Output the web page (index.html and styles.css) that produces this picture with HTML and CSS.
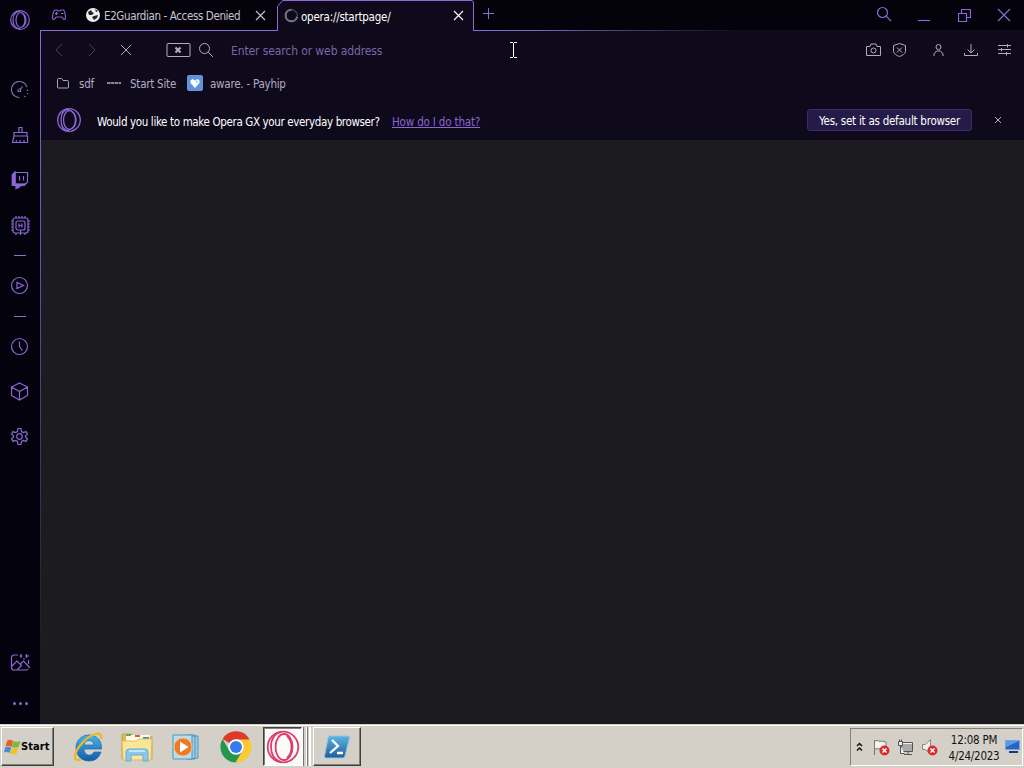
FILE: index.html
```html
<!DOCTYPE html>
<html lang="en">
<head>
  <meta charset="UTF-8" />
  <meta name="viewport" content="width=device-width, initial-scale=1.0"/>
  <title>Opera GX</title>
  <link rel="stylesheet" href="styles.css">
</head>
<body>
  <div class="browser">
    <aside class="sidebar">
      <div class="side-logo">
        <svg width="22" height="22" viewBox="0 0 22 22"><circle cx="11" cy="11" r="9.300"/><ellipse cx="11.500" cy="11" rx="4.500" ry="7.500"/><path d="M11 2C5 3 4 7 4 11s2 8 7 9M12.500 4c6 2 6 12 0 14"/></svg>
      </div>
      <div class="side-item dim">
        <svg width="20" height="20" viewBox="0 0 20 20"><path d="M9.500 17.500a8 8 0 1 1 7.500-10.500"/><path d="M17.500 9.500v1.500M17.500 13v1M15.500 16l-1 1"/><path d="M12.500 6.500l-2 3M8 9.500v2h2.500v-2.500H8.500"/></svg>
      </div>
      <div class="side-item">
        <svg width="20" height="20" viewBox="0 0 20 20"><path d="M9 7.500V2.500h3v5M4 11V7.500h13V11zM4 11l-1.500 6.500h15V11M6 17.500l.5-2.500M10 17.500V15M14 17.500V15"/></svg>
      </div>
      <div class="side-item">
        <svg width="20" height="20" viewBox="0 0 20 20"><path d="M5 2.500h12.500V12L14 15.500h-3L8 18v-2.500H5z"/><path class="solid" d="M5 2L2 5v10.500h4v3l3-3h5l2-2H5z"/><path d="M9.500 6v4.500M13.500 6v4.500"/></svg>
      </div>
      <div class="side-item">
        <svg width="20" height="20" viewBox="0 0 20 20"><rect x="3" y="3" width="15" height="15" rx="2"/><rect x="6" y="6" width="9" height="9" rx="2"/><path d="M9 8.500v4M12 8.500v4M9 10.500h3M6 1v2M9 1v2M12 1v2M15 1v2M6 18v2M10.500 15v5M15 18v2M1 6h2M1 9h2M1 12h2M1 15h2M18 6h2M18 9h2M18 12h2M18 15h2"/></svg>
      </div>
      <div class="side-dash"></div>
      <div class="side-item">
        <svg width="20" height="20" viewBox="0 0 20 20"><circle cx="9.500" cy="9.500" r="8"/><path d="M7 6.500v6l6.500-3z"/></svg>
      </div>
      <div class="side-dash"></div>
      <div class="side-item">
        <svg width="20" height="20" viewBox="0 0 20 20"><circle cx="9.500" cy="9.500" r="8"/><path d="M9.500 4.500v5l3 4"/></svg>
      </div>
      <div class="side-item">
        <svg width="20" height="20" viewBox="0 0 20 20"><path d="M9.500 1l8 4v8.500l-8 4.500-8-4.500V5zM1.500 5l8 4.500 8-4.500M9.500 9.500V18"/></svg>
      </div>
      <div class="side-item">
        <svg width="20" height="20" viewBox="0 0 20 20"><g transform="translate(-.5 -.5)"><circle cx="10" cy="10" r="2.800"/><path d="M8 5l.5-3h3l.5 3 2 1.100 2.500-1 1.500 2.500-2 1.700v1.400l2 1.700-1.500 2.500-2.500-1L12 15l-.5 3h-3L8 15l-2-1.100-2.500 1L2 12.400l2-1.700V9.300L2 7.600l1.500-2.500 2.500 1z"/></g></svg>
      </div>
      <div class="side-bottom">
        <svg width="22" height="20" viewBox="0 0 22 20"><path d="M9 3H5a2.500 2.500 0 0 0-2.500 2.500v10A2.500 2.500 0 0 0 5 18h12q1.500 0 2-1M3 14l5-5 4.500 4.500L8 18M11.500 12l3-3 6.500 7M19.500 8v4M12 2v4M10.500 4h3M17.500 2v4M16 4h4M14 7h2"/></svg>
        <div class="dots"><i></i><i></i><i></i></div>
      </div>
    </aside>

    <main class="window">
      <header class="tabstrip">
        <div class="tabs-left">
          <svg class="pad" width="16" height="14" viewBox="0 0 16 14"><path d="M4 2h2l1.200 1h1.600L10 2h2.500Q14 3 14.500 9q0 2.500-1 2.500C12 11.500 11.500 9 10.500 9h-5C4.500 9 4 11.500 2.500 11.500q-1 0-1-2.500Q2 3 4 2z"/><path d="M4 5.500h3M5.500 4v3M10 5.500h2.500"/></svg>
          <div class="tab">
            <svg width="14" height="14" viewBox="0 0 14 14"><circle class="globe" cx="7" cy="7" r="7"/><path class="land" d="M2 4l3-2 1 2 2 1-2 2-3 0zM8 8l4-1-1 3-3 2-2-3zM9 1l3 2-2 1z"/></svg>
            <span class="tab-title">E2Guardian - Access Denied</span>
            <svg class="x" width="11" height="11" viewBox="0 0 11 11"><path d="M1 1l9 9M10 1l-9 9"/></svg>
          </div>
        </div>
        <div class="tab active">
          <svg class="tab-shape" width="197" height="31" viewBox="0 0 197 31"><path d="M.5 31V6.500L5.500.5h188.500a2.500 2.500 0 0 1 2.500 2.500v28"/></svg>
          <svg class="spin" width="15" height="15" viewBox="0 0 15 15"><circle cx="7.500" cy="7.500" r="5.800"/><path d="M7.500 1.700a5.800 5.800 0 1 0 5.600 7"/></svg>
          <span class="tab-title">opera://startpage/</span>
          <svg class="x" width="11" height="11" viewBox="0 0 11 11"><path d="M1 1l9 9M10 1l-9 9"/></svg>
        </div>
        <div class="tabs-right">
          <svg width="11" height="11" viewBox="0 0 11 11"><path d="M5.500 0v11M0 5.500h11"/></svg>
          <div class="win-buttons">
            <svg width="16" height="16" viewBox="0 0 16 16"><circle cx="6.500" cy="6.500" r="5"/><path d="M10.200 10.200L15 15"/></svg>
            <svg width="12" height="16" viewBox="0 0 12 16"><path d="M0 14.500h12"/></svg>
            <svg width="13" height="13" viewBox="0 0 13 13"><path d="M.5 4.500h8v8h-8zM3.500 4V.5h9v8H9"/></svg>
            <svg width="14" height="14" viewBox="0 0 14 14"><path d="M1 1l12 12M13 1L1 13"/></svg>
          </div>
        </div>
      </header>

      <div class="toolbar">
        <svg class="off" width="8" height="14" viewBox="0 0 8 14"><path d="M7 1L1 7l6 6"/></svg>
        <svg class="off fwd" width="8" height="14" viewBox="0 0 8 14"><path d="M1 1l6 6-6 6"/></svg>
        <svg class="stop" width="12" height="12" viewBox="0 0 12 12"><path d="M1 1l10 10M11 1L1 11"/></svg>
        <svg class="badge" width="25" height="15" viewBox="0 0 25 15"><rect x="1" y=".5" width="23" height="13" rx="1"/><path d="M9.500 4.500l5 5M14.500 4.500l-5 5"/></svg>
        <svg class="glass" width="16" height="16" viewBox="0 0 16 16"><circle cx="6.500" cy="6.500" r="5"/><path d="M10.200 10.200L15 15"/></svg>
        <span class="address">Enter search or web address</span>
        <svg class="cursor" width="7" height="16" viewBox="0 0 7 16"><path d="M0 .5h3M4 .5h3M3.500 1v14M0 15.500h3M4 15.500h3"/></svg>
        <div class="tools">
          <svg width="15" height="14" viewBox="0 0 15 14"><path d="M.5 3.500h3.500l1-2.500h5l1 2.500h3.500v9H.5z"/><circle cx="7.500" cy="7.500" r="2.500"/></svg>
          <svg width="13" height="14" viewBox="0 0 13 14"><path d="M6.500.5l6 2v6c0 2-3 4-6 5-3-1-6-3-6-5v-6zM4 4.500l5 5M9 4.500l-5 5"/></svg>
          <svg width="11" height="14" viewBox="0 0 11 14"><circle cx="5.500" cy="4" r="2.500"/><path d="M1 13v-2l2.500-3h4l2.500 3v2"/></svg>
          <svg width="14" height="14" viewBox="0 0 14 14"><path d="M7 1v8.500M3.500 6.500L7 10l3.500-3.500M.5 10v2.500h13V10"/></svg>
          <svg width="13" height="12" viewBox="0 0 13 12"><path d="M0 1.500h13M0 5.500h13M0 9.500h13M9.500 0v3.500M3.500 4v3.500M8.500 8v3.500"/></svg>
        </div>
      </div>

      <nav class="bookmarks">
        <svg width="13" height="11" viewBox="0 0 13 11"><path d="M.5 9V1.500a1 1 0 0 1 1-1h3L6 2.500h4.500a1 1 0 0 1 1 1V9a1 1 0 0 1-1 1h-9a1 1 0 0 1-1-1z"/></svg>
        <span class="bm-sdf">sdf</span>
        <i class="bm-dash"></i>
        <span class="bm-site">Start Site</span>
        <svg class="bm-heart" width="16" height="16" viewBox="0 0 16 16"><rect width="16" height="16" rx="2"/><path d="M8 13L3.500 8V5.500L5.500 4 8 5.500 10.500 4l2 1.500V8z"/><path class="spark" d="M8 6l2-1 1 2-1.500 1.500z"/></svg>
        <span class="bm-aware">aware. - Payhip</span>
      </nav>

      <div class="infobar">
        <svg class="info-logo" width="26" height="26" viewBox="0 0 26 26"><circle cx="13" cy="13" r="11.300"/><ellipse cx="13.500" cy="13" rx="6" ry="9.500"/><path d="M13 2C6 3 5 8 5 13s2 10 8 11M15.500 4.500c6 3 6 14 0 17"/></svg>
        <span class="question">Would you like to make Opera GX your everyday browser?</span>
        <a class="howto" href="#">How do I do that?</a>
        <button class="default-btn"><span>Yes, set it as default browser</span></button>
        <svg class="close" width="8" height="8" viewBox="0 0 8 8"><path d="M1 1l6 6M7 1L1 7"/></svg>
      </div>
      <section class="page"></section>
    </main>
  </div>

  <footer class="taskbar">
    <div class="start">
      <svg width="17" height="16" viewBox="0 0 17 16"><path fill="#e2622c" d="M3 2c2-2 4-1.500 6 0L7.700 8C6 7 4 6.500 1.500 7.500z"/><path fill="#7fb83c" d="M9.500 2c2 1 4 1 7 0L14.700 8c-2 1-4.500 1-6.700 0z"/><path fill="#4d8bd6" d="M1.200 8.200c2-1 4.300-.5 6.200.5L5.500 14c-1.500-1-3-1.500-5.500-.5z"/><path fill="#f2c32d" d="M7.800 8.700c2 1 4.500 1 6.700 0L12.500 15c-2 1-4.500.5-6.500-.5z"/></svg>
      <span>Start</span>
    </div>
    <div class="launch">
      <svg width="32" height="32" viewBox="0 0 32 32">
        <defs><linearGradient id="ie" x1="0" y1="0" x2="0" y2="1"><stop offset="0" stop-color="#48b5ed"/><stop offset="1" stop-color="#105cab"/></linearGradient></defs>
        <path fill="url(#ie)" stroke="#1769ad" stroke-width=".7" d="M17 4c8 0 13 6 12.500 14H12c0 7 8 8 10 3h7c-2 6-6 9-12 9C9 30 4 24 4 17S9 4 17 4zm-5 10h10c-.5-6-9.500-6-10 0z"/>
        <path fill="none" stroke="#edb729" stroke-width="2.300" d="M29 8c1-4-1-6-5-5C15 5 4 17 3 25c-.5 4 2 5 6 3"/>
      </svg>
      <svg width="34" height="32" viewBox="0 0 34 32">
        <path fill="#ddb85a" stroke="#c9a34b" d="M2 3h10l2 3h18v22H2z"/><path fill="#fffbe0" d="M6 4h24v8H6z"/><path fill="#67a85c" d="M6 3h5v2H6z"/><path fill="#d75a4a" d="M15 4h5v2h-5z"/><path fill="#4584bd" d="M23 6h6v2h-6z"/>
        <path fill="#f8e69a" stroke="#dfbd5d" d="M2 10h14l3-2h13l-1 21H3z"/>
        <path fill="#8bc7ea" stroke="#69add3" d="M6 30V21q0-3 3-3h16q3 0 3 3v9h-5v-6H11v6z"/><path stroke="#d9f0fa" stroke-width="1.500" d="M9 20h16"/>
      </svg>
      <svg width="30" height="28" viewBox="0 0 30 28">
        <path fill="#9fcbe0" stroke="#4b97bf" d="M17 3l9 0v22l-9 1zM14 2h9v24h-9z"/><path fill="#bbddeb" stroke="#4b97bf" d="M1 2h19v24H1z"/>
        <circle fill="#ef7a25" stroke="#f8c18e" cx="11" cy="14" r="9"/><path fill="#fff" d="M8 8.500v11l8.500-5.500z"/>
      </svg>
      <svg width="32" height="32" viewBox="0 0 32 32">
        <path fill="#dc3b2c" d="M16 16L2.600 8A15.500 15.500 0 0 1 29.600 8.500z"/><path fill="#fcc934" d="M16 8.500h13.600A15.500 15.500 0 0 1 15.500 31.500l7-11.700z"/><path fill="#24974c" d="M2.600 8A15.500 15.500 0 0 0 15.500 31.500l7-11.700L9 19z"/>
        <circle fill="#fff" cx="16" cy="16" r="7.700"/><circle fill="#337bea" cx="16" cy="16" r="6"/>
      </svg>
    </div>
    <div class="task pressed">
      <svg width="34" height="34" viewBox="0 0 34 34"><circle cx="17" cy="17" r="15.300"/><ellipse cx="18" cy="17" rx="8.500" ry="13"/><path d="M15 2C7 4 5 10 5 17s3 13 10 15M21 6c6 5 6 17 0 22"/></svg>
    </div>
    <div class="stack"></div>
    <div class="task">
      <svg width="28" height="24" viewBox="0 0 28 24">
        <defs><linearGradient id="ps" x1="0" y1="0" x2="0" y2="1"><stop offset="0" stop-color="#5eb5df"/><stop offset="1" stop-color="#1e5d9d"/></linearGradient></defs>
        <path fill="url(#ps)" stroke="#8ec9e5" d="M6 1h19q2 0 1.500 2L22 21q-.5 2-2 2H3q-2 0-1.500-2L5 3q0-2 1-2z"/><path fill="none" stroke="#fff" stroke-width="2.300" d="M9 5l6 6-8 7M14 18h6"/>
      </svg>
    </div>
    <div class="tray">
      <svg width="7" height="10" viewBox="0 0 7 10"><path fill="none" stroke="#111" stroke-width="1.500" d="M1 4l2.500-2.500L6 4M1 8.500L3.500 6 6 8.500"/></svg>
      <svg class="flag" width="17" height="17" viewBox="0 0 17 17"><path fill="#f4f4f1" stroke="#777" d="M1.500 16V1M2 2c3-1.500 4 1.500 7 0l4 1v7c-4 1-5-1-11 0"/><circle fill="#d92b30" cx="11.500" cy="11.500" r="5"/><path stroke="#fff" stroke-width="1.500" d="M9.500 9.500l4 4M13.500 9.500l-4 4"/></svg>
      <svg class="net" width="17" height="17" viewBox="0 0 17 17"><path fill="#aaa" stroke="#555" d="M4.500 3.500h11v9h-11zM7 15.500h8M11 12.500v3"/><path stroke="#eee" d="M6 4.500h9"/><path fill="#eee" stroke="#555" d="M1.500 2.500h4v4h-4zM2.500.5v2M4.500.5v2M3.500 6.500v8h4"/></svg>
      <svg class="sound" width="17" height="17" viewBox="0 0 17 17"><path fill="#eee" stroke="#888" d="M1.500 5.500h3l5-5v15l-5-5h-3z"/><circle fill="#d92b30" cx="11.500" cy="11.500" r="5"/><path stroke="#fff" stroke-width="1.500" d="M9.500 9.500l4 4M13.500 9.500l-4 4"/></svg>
      <div class="clock"><span class="time">12:08 PM</span><span class="date">4/24/2023</span></div>
      <svg class="desk" width="15" height="14" viewBox="0 0 15 14"><path fill="#2864c6" stroke="#79a3df" d="M.5.5h14v9H.5z"/><path fill="#599be7" d="M1 1h13L1 7z"/><path stroke="#123e80" stroke-width="2" d="M4 12h9"/></svg>
    </div>
  </footer>
</body>
</html>
```

FILE: styles.css
```css
* {
  box-sizing: border-box;
}
body {
  margin: 0;
  width: 1024px;
  height: 768px;
  overflow: hidden;
  background: #1c1c20;
  font-family: "DejaVu Sans Condensed", "DejaVu Sans", sans-serif;
  font-stretch: condensed;
  font-size: 11.5px;
  letter-spacing: -0.24px;
  line-height: 16px;
  white-space: nowrap;
}
svg {
  display: block;
  flex: none;
  fill: none;
}
.browser {
  display: flex;
  height: 724px;
}

/* sidebar */
.sidebar {
  display: flex;
  flex-direction: column;
  width: 40px;
  background: #04020c;
}
.sidebar svg {
  stroke: #8b68d6;
  stroke-width: 1.2;
}
.sidebar .solid {
  fill: #8b68d6;
  clip-path: polygon(0 0, 5px 0, 5px 13px, 17px 13px, 17px 20px, 0 20px);
}
.side-logo {
  display: flex;
  justify-content: center;
  height: 67px;
  padding-top: 9px;
}
.side-item {
  display: flex;
  align-items: center;
  justify-content: center;
  height: 45px;
}
.sidebar .dim svg {
  stroke: #846ea6;
}
.side-dash {
  display: flex;
  align-items: center;
  justify-content: center;
  height: 16px;
}
.side-dash::before {
  content: "";
  width: 12px;
  height: 1px;
  background: #8e72c6;
}
.side-bottom {
  display: flex;
  flex-direction: column;
  align-items: center;
  gap: 30px;
  margin-top: auto;
  padding-bottom: 19px;
}
.dots {
  display: flex;
  gap: 3px;
}
.dots i {
  width: 3px;
  height: 3px;
  border-radius: 50%;
  background: #8b68d6;
}

/* tab strip */
.window {
  display: flex;
  flex-direction: column;
  width: 984px;
  background: linear-gradient(#8c6bd8 0, #6b50b5 220px, #1c1c20 620px) 0 30px / 1px 694px no-repeat, #0e0a1b;
  padding-left: 1px;
}
.tabstrip {
  display: flex;
  height: 31px;
  margin-left: -1px;
}
.tabs-left {
  display: flex;
  align-items: center;
  width: 237px;
  padding-left: 11px;
  background: #04020a;
  border-bottom: 1px solid #8c6bd8;
}
.tabs-left .pad {
  stroke: #8665cc;
  stroke-width: 1.2;
}
.tab {
  display: flex;
  align-items: center;
}
.tabs-left .tab {
  margin-left: 19px;
}
.globe {
  fill: #eee;
}
.land {
  fill: #222;
}
.tab-title {
  padding-top: 2px;
}
.tabs-left .tab-title {
  width: 151px;
  margin-left: 4px;
  color: #c9c5d2;
  letter-spacing: -0.38px;
}
.x {
  stroke: #c9c5d2;
  stroke-width: 1.1;
}
.active {
  position: relative;
  width: 197px;
  padding-left: 7px;
  background: #04020a;
}
.tab-shape {
  position: absolute;
  left: 0;
  top: 0;
  fill: #0e0a1b;
  stroke: #8c6bd8;
}
.active .spin,
.active .tab-title,
.active .x {
  position: relative;
}
.spin {
  stroke: #34313d;
  stroke-width: 2;
}
.spin path {
  stroke: #77747d;
}
.active .tab-title {
  width: 151px;
  margin-left: 2px;
  color: #fff;
}
.active .x {
  margin-left: 1px;
  stroke: #fff;
}
.tabs-right {
  display: flex;
  justify-content: space-between;
  flex: 1;
  padding: 8px 13px 0 9px;
  background: linear-gradient(90deg, #8c6bd8 0, #8168c0 60px, #4b4069 150px, #0e0a1b 270px) 0 30px / 100% 1px no-repeat, #04020a;
  stroke: #8b68d6;
}
.win-buttons {
  display: flex;
  margin-top: -2px;
  stroke-width: 1.2;
}
.win-buttons svg:nth-child(2) {
  margin-left: 26px;
}
.win-buttons svg:nth-child(3) {
  margin: 3px 0 0 28px;
}
.win-buttons svg:nth-child(4) {
  margin: 2px 0 0 26px;
}

/* address row */
.toolbar {
  display: flex;
  align-items: center;
  height: 38px;
  padding: 0 13px 0 14px;
  stroke: #b2acc0;
}
.off {
  stroke: #423c54;
}
.fwd {
  margin-left: 25px;
}
.stop {
  margin-left: 24px;
}
.badge {
  margin-left: 34px;
}
.badge path {
  stroke-width: 2.2;
}
.glass {
  margin-left: 7px;
}
.address {
  width: 270px;
  margin-left: 17px;
  padding-top: 2px;
  color: #7867a6;
  font-size: 12px;
  letter-spacing: -0.11px;
}
.cursor {
  margin-left: 9px;
  stroke: #fff;
}
.tools {
  display: flex;
  align-items: center;
  margin-left: auto;
}
.tools svg:nth-child(2) {
  margin-left: 12px;
}
.tools svg:nth-child(3) {
  margin-left: 27px;
}
.tools svg:nth-child(4) {
  margin-left: 20px;
}
.tools svg:nth-child(5) {
  margin-left: 20px;
}

/* bookmarks */
.bookmarks {
  display: flex;
  align-items: center;
  height: 28px;
  padding-left: 16px;
  color: #b3acc4;
  stroke: #aaa4b8;
}
.bookmarks span {
  padding-top: 2px;
}
.bm-sdf {
  width: 28px;
  margin-left: 9px;
}
.bm-dash {
  width: 14px;
  height: 2px;
  background: repeating-linear-gradient(90deg, #8a8498 0 3px, #4b465a 3px 4px);
}
.bm-site {
  width: 57px;
  margin-left: 9px;
}
.bm-heart {
  fill: #5f93dc;
  stroke: none;
}
.bm-heart path {
  fill: #fff;
}
.bm-heart .spark {
  fill: #9de0ee;
}
.bm-aware {
  margin-left: 7px;
}

/* default browser prompt */
.infobar {
  display: flex;
  align-items: center;
  height: 43px;
  padding: 3px 22px 0 15px;
}
.info-logo {
  stroke: #8b68d6;
  stroke-width: 1.3;
}
.question {
  width: 295px;
  margin-left: 15px;
  padding-top: 3px;
  color: #fff;
  letter-spacing: -0.36px;
}
.howto {
  padding-top: 3px;
  color: #8b65d5;
  letter-spacing: -0.17px;
}
.default-btn {
  width: 165px;
  height: 22px;
  margin-left: auto;
  padding: 1px 0 0;
  border: 1px solid #3a2c66;
  border-radius: 3px;
  background: #241b49;
  color: #fff;
  font: inherit;
  letter-spacing: -0.25px;
}
.close {
  margin-left: 22px;
  stroke: #b8b3c3;
}
.page {
  flex: 1;
  background: #1c1c20;
}

/* taskbar */
.taskbar {
  display: flex;
  align-items: flex-start;
  height: 44px;
  padding: 2px 0 0 1px;
  border-top: 1px solid #d4d0c8;
  background: linear-gradient(#fff, #fff) 0 0 / 100% 1px no-repeat, #d4d0c8;
}
.start,
.task {
  display: flex;
  align-items: center;
  height: 39px;
  border: 1px solid;
  border-color: #fff #404040 #404040 #fff;
  box-shadow: inset -1px -1px #808080;
}
.start {
  width: 53px;
  padding-left: 2px;
  color: #000;
  font-size: 11px;
  font-weight: bold;
  letter-spacing: 0.1px;
}
.launch {
  display: flex;
  align-items: center;
  height: 39px;
  margin-left: 18px;
}
.launch svg:nth-child(2) {
  margin-left: 16px;
}
.launch svg:nth-child(3) {
  margin-left: 18px;
}
.launch svg:nth-child(4) {
  margin-left: 18px;
}
.task {
  justify-content: center;
  width: 48px;
}
.pressed {
  width: 39px;
  margin-left: 11px;
  border-color: #404040 #fff #fff #404040;
  box-shadow: inset 1px 1px #808080;
  background: #fcfafa;
  stroke: #dc3d6a;
  stroke-width: 1.8;
}
.stack {
  width: 9px;
  height: 39px;
  margin-right: 2px;
  border-right: 2px solid #fff;
  background: linear-gradient(90deg, #fff 1px, #777 1px 2px, #d4d0c8 2px 4px, #fff 4px 5px, #777 5px 6px, #d4d0c8 6px);
}
.tray {
  display: flex;
  align-items: center;
  width: 173px;
  height: 38px;
  margin: 1px 1px 0 auto;
  padding-left: 5px;
  border: 1px solid;
  border-color: #808080 #fff #fff #808080;
}
.flag {
  margin-left: 10px;
}
.net,
.sound {
  margin-left: 7px;
}
.clock {
  display: flex;
  flex-direction: column;
  align-items: center;
  width: 52px;
  margin-left: 10px;
  padding-top: 1px;
  color: #111;
}
.desk {
  margin-left: 5px;
}
```
